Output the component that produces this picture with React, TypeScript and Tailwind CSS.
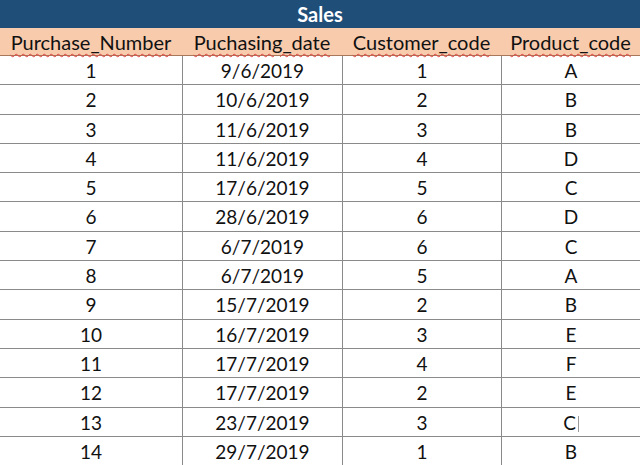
const rows: [string, string, string, string][] = [
  ['1', '9/6/2019', '1', 'A'],
  ['2', '10/6/2019', '2', 'B'],
  ['3', '11/6/2019', '3', 'B'],
  ['4', '11/6/2019', '4', 'D'],
  ['5', '17/6/2019', '5', 'C'],
  ['6', '28/6/2019', '6', 'D'],
  ['7', '6/7/2019', '6', 'C'],
  ['8', '6/7/2019', '5', 'A'],
  ['9', '15/7/2019', '2', 'B'],
  ['10', '16/7/2019', '3', 'E'],
  ['11', '17/7/2019', '4', 'F'],
  ['12', '17/7/2019', '2', 'E'],
  ['13', '23/7/2019', '3', 'C'],
  ['14', '29/7/2019', '1', 'B'],
];

const headers = ['Purchase_Number', 'Puchasing_date', 'Customer_code', 'Product_code'];

const cols = 'grid grid-cols-[182px_160px_159px_139px]';

export default function App() {
  return (
    <div className="w-[640px] h-[465px] overflow-hidden bg-white text-[#111] font-['Lato','Open_Sans',sans-serif]">
      <div className="h-[28px] bg-[#1F4E79] text-white font-bold text-[20px] leading-[28px] text-center">
        Sales
      </div>

      <div className={`${cols} h-[28px] bg-[#F8CBAD] border-b border-[#a8785a] text-[20px] leading-[28px]`}>
        {headers.map((h) => (
          <div key={h} className="text-center whitespace-nowrap">
            <span className="underline decoration-wavy decoration-[#e04040] decoration-1 underline-offset-[3px]">
              {h}
            </span>
          </div>
        ))}
      </div>

      {rows.map((r, i) => (
        <div key={i} className={`${cols} h-[29.3px] border-b border-[#8a8a8a] text-[19px] leading-[29px]`}>
          <div className="text-center">{r[0]}</div>
          <div className="text-center border-l border-[#8a8a8a]">{r[1]}</div>
          <div className="text-center border-l border-[#8a8a8a]">{r[2]}</div>
          <div className="text-center border-l border-[#8a8a8a]">
            {r[3]}
            {i === 12 && <span className="inline-block w-px h-[16px] bg-[#9a9a9a] ml-[2px] align-[-2px]" />}
          </div>
        </div>
      ))}
    </div>
  );
}
